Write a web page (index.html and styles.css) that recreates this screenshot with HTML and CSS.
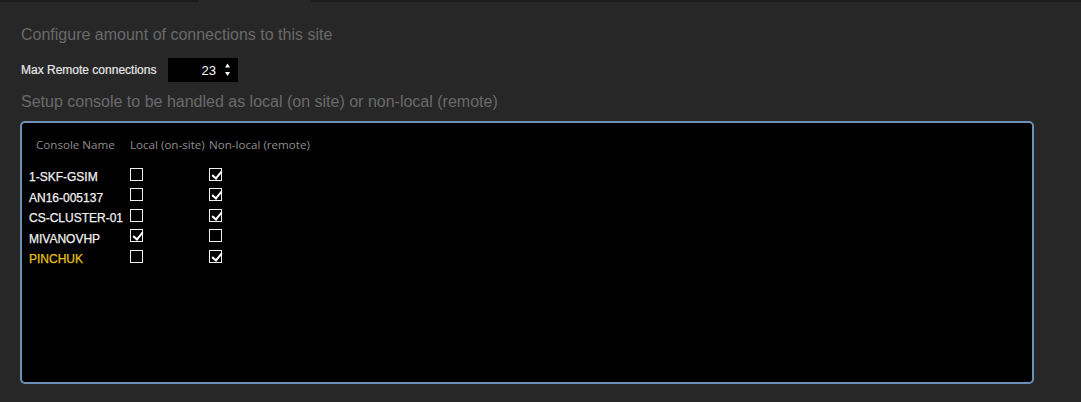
FILE: index.html
```html
<!DOCTYPE html>
<html>
<head>
<meta charset="utf-8">
<link rel="stylesheet" href="styles.css">
</head>
<body>
<div class="topbar">
  <div class="bar-seg left"></div>
  <div class="bar-gap"></div>
  <div class="bar-seg right"></div>
</div>
<main class="content">
  <h2 class="section-title first">Configure amount of connections to this site</h2>
  <div class="field">
    <label class="field-label">Max Remote connections</label>
    <div class="spinner">
      <span class="spin-value">23</span>
      <span class="spin-arrows">
        <svg width="7" height="16" viewBox="0 0 7 16"><path d="M3.5 1.5 L6 5.5 L1 5.5 Z" fill="#fff"/><path d="M1 10 L6 10 L3.5 14 Z" fill="#fff"/></svg>
      </span>
    </div>
  </div>
  <h2 class="section-title second">Setup console to be handled as local (on site) or non-local (remote)</h2>
  <div class="panel">
    <div class="grid header">
      <span class="h-name">Console Name</span>
      <span>Local (on-site)</span>
      <span>Non-local (remote)</span>
    </div>
    <div class="rows">
      <div class="grid row">
        <span class="name">1-SKF-GSIM</span>
        <span class="cb"></span>
        <span class="cb checked"></span>
      </div>
      <div class="grid row">
        <span class="name">AN16-005137</span>
        <span class="cb"></span>
        <span class="cb checked"></span>
      </div>
      <div class="grid row">
        <span class="name">CS-CLUSTER-01</span>
        <span class="cb"></span>
        <span class="cb checked"></span>
      </div>
      <div class="grid row">
        <span class="name">MIVANOVHP</span>
        <span class="cb checked"></span>
        <span class="cb"></span>
      </div>
      <div class="grid row">
        <span class="name highlight">PINCHUK</span>
        <span class="cb"></span>
        <span class="cb checked"></span>
      </div>
    </div>
  </div>
</main>
</body>
</html>
```
FILE: styles.css
```css
html, body {
  margin: 0;
  padding: 0;
  background: #272727;
  font-family: "Liberation Sans", Arial, sans-serif;
  width: 1081px;
  height: 402px;
  overflow: hidden;
}
.topbar {
  display: flex;
  height: 2px;
}
.bar-seg {
  background: #1c1c1c;
}
.bar-seg.left { width: 199px; }
.bar-gap { width: 112px; }
.bar-seg.right { flex: 1; }

.content {
  padding: 0 47px 0 20px;
}
.section-title {
  margin: 0;
  font-weight: normal;
  font-size: 16px;
  line-height: 18px;
  color: #6a6a6a;
  padding-left: 1px;
}
.section-title.first {
  margin-top: 24px;
}
.field {
  display: flex;
  align-items: center;
  margin-top: 14px;
  height: 24px;
}
.field-label {
  font-size: 12px;
  color: #e6e6e6;
  padding-left: 1px;
  width: 147px;
  -webkit-text-stroke: 0.2px #e6e6e6;
}
.spinner {
  display: flex;
  align-items: center;
  justify-content: flex-end;
  width: 70px;
  height: 24px;
  background: #000;
  box-sizing: border-box;
  padding-right: 7px;
}
.spin-value {
  font-size: 13px;
  color: #fff;
  margin-right: 8px;
}
.spin-arrows {
  display: flex;
  align-items: center;
}
.section-title.second {
  margin-top: 11px;
}
.panel {
  margin-top: 10px;
  height: 263px;
  box-sizing: border-box;
  background: #000;
  border: 2px solid #6b91b9;
  border-radius: 5px;
  padding: 13px 7px 0 7px;
}
.grid {
  display: grid;
  grid-template-columns: 101px 79px 1fr;
  align-items: center;
}
.header {
  font-family: "Open Sans", "Noto Sans", sans-serif;
  font-size: 11.6px;
  color: #8d8d8d;
  height: 16px;
}
.h-name {
  padding-left: 7px;
}
.rows {
  margin-top: 15px;
}
.row {
  height: 20.5px;
}
.name {
  font-size: 12px;
  color: #f2f2f2;
  -webkit-text-stroke: 0.25px #f2f2f2;
}
.name.highlight {
  color: #e8c21c;
  -webkit-text-stroke: 0.25px #e8c21c;
}
.cb {
  width: 13px;
  height: 13px;
  box-sizing: border-box;
  border: 1px solid #f0f0f0;
  margin-top: -6px;
  position: relative;
}
.cb.checked::after {
  content: "";
  position: absolute;
  left: 4px;
  top: 0px;
  width: 4px;
  height: 8px;
  border-right: 2px solid #fff;
  border-bottom: 2px solid #fff;
  transform: rotate(40deg);
}
```
